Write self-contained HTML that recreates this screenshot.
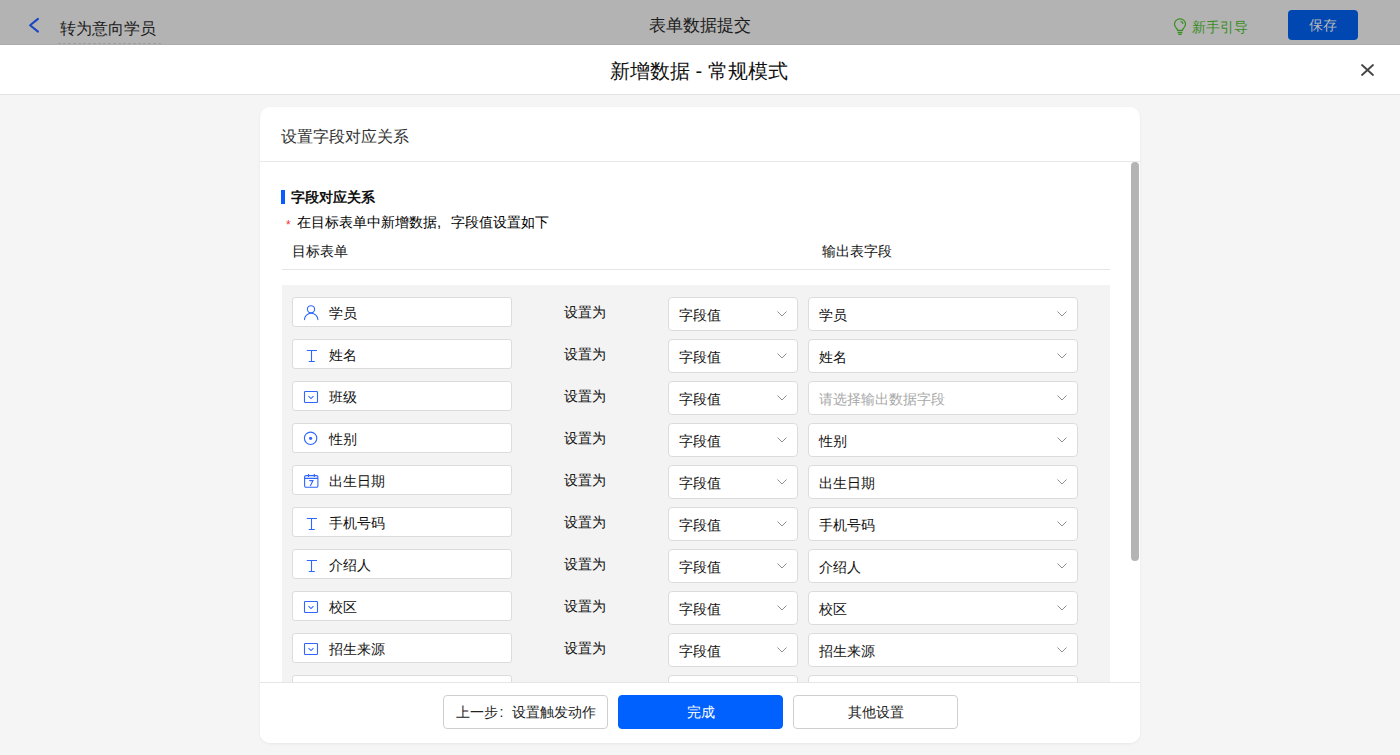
<!DOCTYPE html>
<html><head><meta charset="utf-8">
<style>
*{box-sizing:border-box;margin:0;padding:0}
html,body{width:1400px;height:755px;overflow:hidden}
body{position:relative;background:#f5f5f5;font-family:"Liberation Sans",sans-serif;color:#222;font-size:14px}
.abs{position:absolute;white-space:nowrap;line-height:1}
#top{position:absolute;left:0;top:0;width:1400px;height:45px;background:#b3b3b3;border-bottom:1px solid #acacac}
#mh{position:absolute;left:0;top:45px;width:1400px;height:50px;background:#fff;border-bottom:1px solid #e3e3e3}
#card{position:absolute;left:260px;top:107px;width:880px;height:636px;background:#fff;border-radius:10px;overflow:hidden;box-shadow:0 1px 3px rgba(0,0,0,.06)}
#ch{position:absolute;left:0;top:0;width:880px;height:55px;border-bottom:1px solid #e8e8e8}
#sb{position:absolute;left:871px;top:55px;width:8px;height:399px;background:#b4b4b4;border-radius:4px}
#hdrline{position:absolute;left:22px;top:162px;width:828px;height:1px;background:#e6e6e6}
#gray{position:absolute;left:22px;top:178px;width:828px;height:400px;background:#f3f3f3}
.fb{position:absolute;left:32px;width:220px;height:30px;background:#fff;border:1px solid #dcdcdc;border-radius:3px}
.s1{position:absolute;left:408px;width:130px;height:34px;background:#fff;border:1px solid #dcdcdc;border-radius:4px}
.s2{position:absolute;left:548px;width:270px;height:34px;background:#fff;border:1px solid #dcdcdc;border-radius:4px}
.chev{position:absolute;right:10px;top:13px;width:10px;height:6px}
#foot{position:absolute;left:0;top:575px;width:880px;height:61px;background:#fff;border-top:1px solid #e6e6e6}
.btn{position:absolute;top:12px;width:165px;height:34px;border:1px solid #cfcfcf;border-radius:4px;background:#fff;font-size:14px;color:#222;text-align:center;line-height:32px}
</style></head><body>
<div id="top">
  <svg class="abs" style="left:28px;top:16px" width="13" height="18" viewBox="0 0 13 18"><path d="M10 2.9 L2.1 9.3 L10 15.6" fill="none" stroke="#1b45c4" stroke-width="2" stroke-linecap="round" stroke-linejoin="round"/></svg>
  <div class="abs" style="left:60px;top:21px;font-size:16px;color:#1c1c1c">转为意向学员</div>
  <div class="abs" style="left:58px;top:43px;width:105px;height:1px;background:repeating-linear-gradient(90deg,#9e9e9e 0 3px,transparent 3px 5px)"></div>
  <div class="abs" style="left:649px;top:17px;font-size:17px;color:#1c1c1c">表单数据提交</div>
  <svg class="abs" style="left:1173px;top:18px" width="14" height="18" viewBox="0 0 14 18"><path d="M4.6 12.4 C4.6 10.8 1.5 9.6 1.5 6.3 A5.5 5.5 0 0 1 12.5 6.3 C12.5 9.6 9.4 10.8 9.4 12.4 Z" fill="none" stroke="#3b8d1f" stroke-width="1.25" stroke-linejoin="round"/><path d="M7.6 3.4 A2.8 2.8 0 0 1 10 5.9" fill="none" stroke="#3b8d1f" stroke-width="1.3"/><path d="M4.6 14.5 H9.4 M5.4 16.4 H8.6" stroke="#3b8d1f" stroke-width="1.3"/></svg><div class="abs" style="left:1192px;top:20px;font-size:14px;color:#3b8d1f">新手引导</div>
  <div class="abs" style="left:1288px;top:10px;width:70px;height:30px;background:#0047b2;border-radius:4px"></div>
  <div class="abs" style="left:1309px;top:18px;font-size:14px;color:#b8b8b8">保存</div>
</div>
<div id="mh">
  <div class="abs" style="left:610px;top:16px;font-size:20px;color:#111">新增数据 - 常规模式</div>
  <svg class="abs" style="left:1359px;top:17px" width="17" height="16" viewBox="0 0 17 16"><path d="M3 3 L14 13 M14 3 L3 13" stroke="#444" stroke-width="1.8" stroke-linecap="round"/></svg>
</div>
<div id="card">
  <div id="ch"><div class="abs" style="left:21px;top:22px;font-size:16px;color:#333">设置字段对应关系</div></div>
  <div id="sb"></div>
  <div class="abs" style="left:21px;top:83px;width:4px;height:14px;background:#0a5cff"></div>
  <div class="abs" style="left:31px;top:83px;font-size:14px;font-weight:bold;color:#111">字段对应关系</div>
  <div class="abs" style="left:26px;top:112px;font-size:12px;color:#e33">*</div>
  <div class="abs" style="left:37px;top:107px;font-size:14px;color:#000">在目标表单中新增数据<span style="display:inline-block;width:14px;font-size:15px">,</span>字段值设置如下</div>
  <div class="abs" style="left:32px;top:137px;font-size:14px;color:#111">目标表单</div>
  <div class="abs" style="left:562px;top:137px;font-size:14px;color:#111">输出表字段</div>
  <div id="hdrline"></div>
  <div id="gray"></div>
  <div id="rows"><div class="fb" style="top:190px"></div><svg class="abs" style="left:43px;top:198px" width="16" height="16" viewBox="0 0 16 16"><circle cx="8" cy="4.3" r="3.6" fill="none" stroke="#2f66ff" stroke-width="1.1"/><path d="M1.5 14.6 A6.7 6.4 0 0 1 14.9 14.6" fill="none" stroke="#2f66ff" stroke-width="1.1" stroke-linecap="round"/></svg><div class="abs" style="left:69px;top:199px;font-size:14px;color:#111">学员</div><div class="abs" style="left:304px;top:198px;font-size:14px;color:#111">设置为</div><div class="s1" style="top:190px"><div class="abs" style="left:10px;top:10px;font-size:14px;color:#111">字段值</div><svg class="chev" viewBox="0 0 10 6"><path d="M0.5 0.5 L5 5 L9.5 0.5" fill="none" stroke="#8f8f8f" stroke-width="1"/></svg></div><div class="s2" style="top:190px"><div class="abs" style="left:10px;top:10px;font-size:14px;color:#111">学员</div><svg class="chev" viewBox="0 0 10 6"><path d="M0.5 0.5 L5 5 L9.5 0.5" fill="none" stroke="#8f8f8f" stroke-width="1"/></svg></div><div class="fb" style="top:232px"></div><svg class="abs" style="left:43px;top:240px" width="16" height="16" viewBox="0 0 16 16"><path d="M3.8 3.5 H14 M8.5 3.5 V14.5 M5.8 14.5 H11.8" fill="none" stroke="#2f66ff" stroke-width="1.1"/></svg><div class="abs" style="left:69px;top:241px;font-size:14px;color:#111">姓名</div><div class="abs" style="left:304px;top:240px;font-size:14px;color:#111">设置为</div><div class="s1" style="top:232px"><div class="abs" style="left:10px;top:10px;font-size:14px;color:#111">字段值</div><svg class="chev" viewBox="0 0 10 6"><path d="M0.5 0.5 L5 5 L9.5 0.5" fill="none" stroke="#8f8f8f" stroke-width="1"/></svg></div><div class="s2" style="top:232px"><div class="abs" style="left:10px;top:10px;font-size:14px;color:#111">姓名</div><svg class="chev" viewBox="0 0 10 6"><path d="M0.5 0.5 L5 5 L9.5 0.5" fill="none" stroke="#8f8f8f" stroke-width="1"/></svg></div><div class="fb" style="top:274px"></div><svg class="abs" style="left:43px;top:282px" width="16" height="16" viewBox="0 0 16 16"><rect x="1.5" y="2.5" width="13" height="11" rx="0.8" fill="none" stroke="#2f66ff" stroke-width="1.1"/><path d="M5.5 7.2 L8 9.6 L10.5 7.2" fill="none" stroke="#2f66ff" stroke-width="1.1"/></svg><div class="abs" style="left:69px;top:283px;font-size:14px;color:#111">班级</div><div class="abs" style="left:304px;top:282px;font-size:14px;color:#111">设置为</div><div class="s1" style="top:274px"><div class="abs" style="left:10px;top:10px;font-size:14px;color:#111">字段值</div><svg class="chev" viewBox="0 0 10 6"><path d="M0.5 0.5 L5 5 L9.5 0.5" fill="none" stroke="#8f8f8f" stroke-width="1"/></svg></div><div class="s2" style="top:274px"><div class="abs" style="left:10px;top:10px;font-size:14px;color:#a8a8a8">请选择输出数据字段</div><svg class="chev" viewBox="0 0 10 6"><path d="M0.5 0.5 L5 5 L9.5 0.5" fill="none" stroke="#8f8f8f" stroke-width="1"/></svg></div><div class="fb" style="top:316px"></div><svg class="abs" style="left:43px;top:324px" width="16" height="16" viewBox="0 0 16 16"><circle cx="7.6" cy="7.3" r="6.2" fill="none" stroke="#2f66ff" stroke-width="1.1"/><circle cx="7.6" cy="7.3" r="1.6" fill="#2f66ff"/></svg><div class="abs" style="left:69px;top:325px;font-size:14px;color:#111">性别</div><div class="abs" style="left:304px;top:324px;font-size:14px;color:#111">设置为</div><div class="s1" style="top:316px"><div class="abs" style="left:10px;top:10px;font-size:14px;color:#111">字段值</div><svg class="chev" viewBox="0 0 10 6"><path d="M0.5 0.5 L5 5 L9.5 0.5" fill="none" stroke="#8f8f8f" stroke-width="1"/></svg></div><div class="s2" style="top:316px"><div class="abs" style="left:10px;top:10px;font-size:14px;color:#111">性别</div><svg class="chev" viewBox="0 0 10 6"><path d="M0.5 0.5 L5 5 L9.5 0.5" fill="none" stroke="#8f8f8f" stroke-width="1"/></svg></div><div class="fb" style="top:358px"></div><svg class="abs" style="left:43px;top:366px" width="16" height="16" viewBox="0 0 16 16"><path d="M3 2.6 H13.5 A1.4 1.4 0 0 1 14.9 4 V12.8 A1.4 1.4 0 0 1 13.5 14.2 H3 A1.4 1.4 0 0 1 1.6 12.8 V4 A1.4 1.4 0 0 1 3 2.6 Z" fill="none" stroke="#2f66ff" stroke-width="1.1"/><path d="M1.6 5.4 H14.9 M5.5 1 V4 M11.3 1 V4" fill="none" stroke="#2f66ff" stroke-width="1.1"/><path d="M6.3 7.6 H10 L7.3 13" fill="none" stroke="#2f66ff" stroke-width="1.1"/></svg><div class="abs" style="left:69px;top:367px;font-size:14px;color:#111">出生日期</div><div class="abs" style="left:304px;top:366px;font-size:14px;color:#111">设置为</div><div class="s1" style="top:358px"><div class="abs" style="left:10px;top:10px;font-size:14px;color:#111">字段值</div><svg class="chev" viewBox="0 0 10 6"><path d="M0.5 0.5 L5 5 L9.5 0.5" fill="none" stroke="#8f8f8f" stroke-width="1"/></svg></div><div class="s2" style="top:358px"><div class="abs" style="left:10px;top:10px;font-size:14px;color:#111">出生日期</div><svg class="chev" viewBox="0 0 10 6"><path d="M0.5 0.5 L5 5 L9.5 0.5" fill="none" stroke="#8f8f8f" stroke-width="1"/></svg></div><div class="fb" style="top:400px"></div><svg class="abs" style="left:43px;top:408px" width="16" height="16" viewBox="0 0 16 16"><path d="M3.8 3.5 H14 M8.5 3.5 V14.5 M5.8 14.5 H11.8" fill="none" stroke="#2f66ff" stroke-width="1.1"/></svg><div class="abs" style="left:69px;top:409px;font-size:14px;color:#111">手机号码</div><div class="abs" style="left:304px;top:408px;font-size:14px;color:#111">设置为</div><div class="s1" style="top:400px"><div class="abs" style="left:10px;top:10px;font-size:14px;color:#111">字段值</div><svg class="chev" viewBox="0 0 10 6"><path d="M0.5 0.5 L5 5 L9.5 0.5" fill="none" stroke="#8f8f8f" stroke-width="1"/></svg></div><div class="s2" style="top:400px"><div class="abs" style="left:10px;top:10px;font-size:14px;color:#111">手机号码</div><svg class="chev" viewBox="0 0 10 6"><path d="M0.5 0.5 L5 5 L9.5 0.5" fill="none" stroke="#8f8f8f" stroke-width="1"/></svg></div><div class="fb" style="top:442px"></div><svg class="abs" style="left:43px;top:450px" width="16" height="16" viewBox="0 0 16 16"><path d="M3.8 3.5 H14 M8.5 3.5 V14.5 M5.8 14.5 H11.8" fill="none" stroke="#2f66ff" stroke-width="1.1"/></svg><div class="abs" style="left:69px;top:451px;font-size:14px;color:#111">介绍人</div><div class="abs" style="left:304px;top:450px;font-size:14px;color:#111">设置为</div><div class="s1" style="top:442px"><div class="abs" style="left:10px;top:10px;font-size:14px;color:#111">字段值</div><svg class="chev" viewBox="0 0 10 6"><path d="M0.5 0.5 L5 5 L9.5 0.5" fill="none" stroke="#8f8f8f" stroke-width="1"/></svg></div><div class="s2" style="top:442px"><div class="abs" style="left:10px;top:10px;font-size:14px;color:#111">介绍人</div><svg class="chev" viewBox="0 0 10 6"><path d="M0.5 0.5 L5 5 L9.5 0.5" fill="none" stroke="#8f8f8f" stroke-width="1"/></svg></div><div class="fb" style="top:484px"></div><svg class="abs" style="left:43px;top:492px" width="16" height="16" viewBox="0 0 16 16"><rect x="1.5" y="2.5" width="13" height="11" rx="0.8" fill="none" stroke="#2f66ff" stroke-width="1.1"/><path d="M5.5 7.2 L8 9.6 L10.5 7.2" fill="none" stroke="#2f66ff" stroke-width="1.1"/></svg><div class="abs" style="left:69px;top:493px;font-size:14px;color:#111">校区</div><div class="abs" style="left:304px;top:492px;font-size:14px;color:#111">设置为</div><div class="s1" style="top:484px"><div class="abs" style="left:10px;top:10px;font-size:14px;color:#111">字段值</div><svg class="chev" viewBox="0 0 10 6"><path d="M0.5 0.5 L5 5 L9.5 0.5" fill="none" stroke="#8f8f8f" stroke-width="1"/></svg></div><div class="s2" style="top:484px"><div class="abs" style="left:10px;top:10px;font-size:14px;color:#111">校区</div><svg class="chev" viewBox="0 0 10 6"><path d="M0.5 0.5 L5 5 L9.5 0.5" fill="none" stroke="#8f8f8f" stroke-width="1"/></svg></div><div class="fb" style="top:526px"></div><svg class="abs" style="left:43px;top:534px" width="16" height="16" viewBox="0 0 16 16"><rect x="1.5" y="2.5" width="13" height="11" rx="0.8" fill="none" stroke="#2f66ff" stroke-width="1.1"/><path d="M5.5 7.2 L8 9.6 L10.5 7.2" fill="none" stroke="#2f66ff" stroke-width="1.1"/></svg><div class="abs" style="left:69px;top:535px;font-size:14px;color:#111">招生来源</div><div class="abs" style="left:304px;top:534px;font-size:14px;color:#111">设置为</div><div class="s1" style="top:526px"><div class="abs" style="left:10px;top:10px;font-size:14px;color:#111">字段值</div><svg class="chev" viewBox="0 0 10 6"><path d="M0.5 0.5 L5 5 L9.5 0.5" fill="none" stroke="#8f8f8f" stroke-width="1"/></svg></div><div class="s2" style="top:526px"><div class="abs" style="left:10px;top:10px;font-size:14px;color:#111">招生来源</div><svg class="chev" viewBox="0 0 10 6"><path d="M0.5 0.5 L5 5 L9.5 0.5" fill="none" stroke="#8f8f8f" stroke-width="1"/></svg></div><div class="fb" style="top:568px"></div><svg class="abs" style="left:43px;top:576px" width="16" height="16" viewBox="0 0 16 16"><path d="M3.8 3.5 H14 M8.5 3.5 V14.5 M5.8 14.5 H11.8" fill="none" stroke="#2f66ff" stroke-width="1.1"/></svg><div class="abs" style="left:69px;top:577px;font-size:14px;color:#111">来源渠道</div><div class="abs" style="left:304px;top:576px;font-size:14px;color:#111">设置为</div><div class="s1" style="top:568px"><div class="abs" style="left:10px;top:10px;font-size:14px;color:#111">字段值</div><svg class="chev" viewBox="0 0 10 6"><path d="M0.5 0.5 L5 5 L9.5 0.5" fill="none" stroke="#8f8f8f" stroke-width="1"/></svg></div><div class="s2" style="top:568px"><div class="abs" style="left:10px;top:10px;font-size:14px;color:#111">来源渠道</div><svg class="chev" viewBox="0 0 10 6"><path d="M0.5 0.5 L5 5 L9.5 0.5" fill="none" stroke="#8f8f8f" stroke-width="1"/></svg></div></div>
  <div id="foot">
    <div class="btn" style="left:183px">上一步<span style="display:inline-block;width:14px;text-align:left;padding-left:2px">:</span>设置触发动作</div>
    <div class="btn" style="left:358px;background:#0061ff;border-color:#0061ff;color:#fff">完成</div>
    <div class="btn" style="left:533px">其他设置</div>
  </div>
</div>
</body></html>
